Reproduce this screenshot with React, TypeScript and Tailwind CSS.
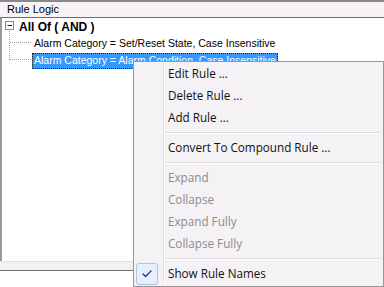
import { Check } from 'lucide-react';

const menuItems: { label: string; disabled?: boolean; sep?: boolean; checked?: boolean }[] = [
  { label: 'Edit Rule ...' },
  { label: 'Delete Rule ...' },
  { label: 'Add Rule ...', sep: true },
  { label: 'Convert To Compound Rule ...', sep: true },
  { label: 'Expand', disabled: true },
  { label: 'Collapse', disabled: true },
  { label: 'Expand Fully', disabled: true },
  { label: 'Collapse Fully', disabled: true, sep: true },
  { label: 'Show Rule Names', checked: true },
];

export default function App() {
  return (
    <div className="relative w-[384px] h-[287px] bg-white overflow-hidden font-['Liberation_Sans',Arial,sans-serif]">
      {/* Panel */}
      <div className="flex flex-col h-[271px] border-b border-[#6e6e6e]">
        <div className="h-[18px] shrink-0 border-t-2 border-b border-t-[#8a8a8a] border-b-[#6e6e6e] bg-[#f7f3f7] pl-[7px] text-[11px] leading-[15px] text-black">
          Rule Logic
        </div>
        <div className="relative flex-1 border-l-2 border-[#9a9a9a] bg-white">
          <svg className="absolute left-0 top-0" width="40" height="60">
            <rect x="3.5" y="3.5" width="8" height="8" fill="white" stroke="#8a8a8a" />
            <line x1="5.5" y1="7.5" x2="10" y2="7.5" stroke="#222" />
            <line x1="7.5" y1="13" x2="7.5" y2="42" stroke="#a0a0a0" strokeDasharray="1 1" />
            <line x1="8" y1="24.5" x2="30" y2="24.5" stroke="#a0a0a0" strokeDasharray="1 1" />
            <line x1="8" y1="41.5" x2="30" y2="41.5" stroke="#a0a0a0" strokeDasharray="1 1" />
          </svg>
          <div className="flex h-[17px] items-center pl-[17px] text-[12px] font-bold text-black">All Of ( AND )</div>
          <div className="flex h-[17px] items-center pl-[32px] text-[10.5px] text-black">
            Alarm Category = Set/Reset State, Case Insensitive
          </div>
          <div className="flex h-[17px] items-center pl-[30px]">
            <span className="flex h-[16px] items-center border border-dotted border-[#222] bg-[#3399ff] px-[1px] text-[10.5px] text-white">
              Alarm Category = Alarm Condition, Case Insensitive
            </span>
          </div>
        </div>
        <div className="h-[9px] shrink-0 bg-[#f3f0f3] border-t border-[#e2dfe2]" />
      </div>

      {/* Context menu */}
      <div className="absolute left-[133px] top-[61px] w-[251px] h-[226px] border border-[#979797] bg-[#f5f2f5] pt-[1px] font-['Open_Sans',sans-serif] text-[11.7px]">
        <div className="absolute left-[29px] top-[1px] bottom-[1px] w-[2px] border-l border-[#e2dfe2] border-r border-r-white" />
        {menuItems.map((it) => (
          <div key={it.label}>
            <div className="relative flex h-[22px] items-center">
              <div className="flex w-[34px] items-center pl-[2px]">
                {it.checked && (
                  <div className="flex h-[22px] w-[22px] items-center justify-center rounded-[3px] border border-[#a8c4ec] bg-[#e8effc]">
                    <Check className="h-[12px] w-[12px] text-[#1d2f8f]" strokeWidth={2.5} />
                  </div>
                )}
              </div>
              <span className={it.disabled ? 'text-[#8c8c8c]' : 'text-[#111]'}>{it.label}</span>
            </div>
            {it.sep && (
              <div className="flex h-[8px] items-center pl-[30px] pr-[2px]">
                <div className="h-[2px] w-full border-t border-[#e0dde0] border-b border-b-white" />
              </div>
            )}
          </div>
        ))}
      </div>
    </div>
  );
}
